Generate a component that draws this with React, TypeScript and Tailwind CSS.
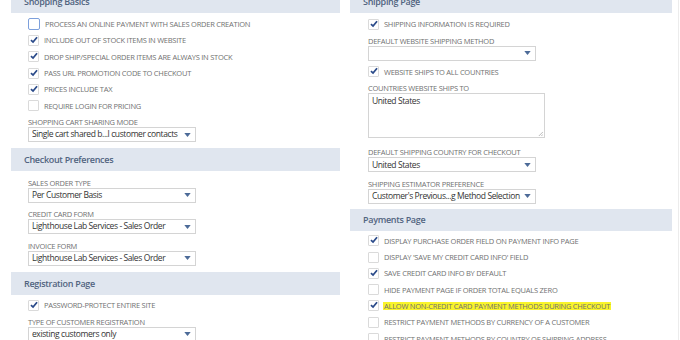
import React from "react";

const font = "font-['Open_Sans','Liberation_Sans',sans-serif]";

function Header({ title }: { title: string }) {
  return (
    <div className="h-[22.5px] bg-[#e0e6ef] pl-[13px] flex items-center text-[9px] tracking-[-0.3px] font-semibold text-[#51647f]">
      {title}
    </div>
  );
}

function Box({ checked, focus }: { checked?: boolean; focus?: boolean }) {
  if (focus) {
    return (
      <div className="w-[12px] h-[12px] shrink-0 border-[1.5px] border-[#7da0dc] rounded-[2px] bg-white" />
    );
  }
  return (
    <div className="w-[11px] h-[11px] shrink-0 border border-[#dadada] rounded-[1px] bg-white relative">
      {checked && (
        <svg
          viewBox="0 0 10 10"
          className="absolute left-[1px] top-[0px] w-[8px] h-[8px]"
        >
          <path
            d="M1.2 5.2 L3.8 7.6 L8.8 1.6"
            fill="none"
            stroke="#2b4b8a"
            strokeWidth="2.2"
          />
        </svg>
      )}
    </div>
  );
}

function CheckRow({
  label,
  checked,
  focus,
  highlight,
}: {
  label: string;
  checked?: boolean;
  focus?: boolean;
  highlight?: boolean;
}) {
  return (
    <div className="h-[16.3px] flex items-center gap-[5px]">
      <Box checked={checked} focus={focus} />
      <span
        className={`text-[7.5px] tracking-[-0.25px] uppercase whitespace-nowrap leading-[8px] text-[#717171] ${
          highlight ? "bg-[#f9f42a] px-[1px] -ml-[1px]" : ""
        }`}
      >
        {label}
      </span>
    </div>
  );
}

function Arrow() {
  return (
    <svg viewBox="0 0 8 5" className="w-[7px] h-[4px] shrink-0">
      <polygon points="0,0 8,0 4,5" fill="#4d6b98" />
    </svg>
  );
}

function Label({ text }: { text: string }) {
  return (
    <div className="h-[10px] leading-[10px] text-[7.5px] tracking-[-0.25px] uppercase whitespace-nowrap text-[#717171]">
      {text}
    </div>
  );
}

function Field({
  label,
  value,
  mt = "mt-[6.5px]",
}: {
  label: string;
  value: string;
  mt?: string;
}) {
  return (
    <div className={mt}>
      <Label text={label} />
      <div className="h-[15px] w-[168px] border border-[#d4d4d4] bg-white flex items-center pl-[3px] pr-[4px] text-[8.5px] tracking-[-0.4px] text-[#333]">
        <span className="flex-1 whitespace-nowrap overflow-hidden">{value}</span>
        <Arrow />
      </div>
    </div>
  );
}

export default function App() {
  return (
    <div className={`w-[680px] h-[340px] overflow-hidden bg-white ${font}`}>
      <div className="flex -mt-[9.5px]">
        {/* left column */}
        <div className="w-[329px] ml-[11px]">
          <Header title="Shopping Basics" />
          <div className="pl-[17px] pt-[3px] pb-[6px]">
            <CheckRow focus label="Process an online payment with sales order creation" />
            <CheckRow checked label="Include out of stock items in website" />
            <CheckRow checked label="Drop ship/special order items are always in stock" />
            <CheckRow checked label="Pass URL promotion code to checkout" />
            <CheckRow checked label="Prices include tax" />
            <CheckRow label="Require login for pricing" />
            <Field mt="mt-[3.5px]" label="Shopping cart sharing mode" value="Single cart shared b...l customer contacts" />
          </div>

          <Header title="Checkout Preferences" />
          <div className="pl-[17px] pt-[0.5px] pb-[6.5px]">
            <Field label="Sales order type" value="Per Customer Basis" />
            <Field label="Credit card form" value="Lighthouse Lab Services - Sales Order" />
            <Field label="Invoice form" value="Lighthouse Lab Services - Sales Order" />
          </div>

          <Header title="Registration Page" />
          <div className="pl-[17px] pt-[2.5px]">
            <CheckRow checked label="Password-protect entire site" />
            <Field mt="mt-[3px]" label="Type of customer registration" value="existing customers only" />
          </div>
        </div>

        {/* right column */}
        <div className="w-[322px] ml-[10px]">
          <Header title="Shipping Page" />
          <div className="pl-[18px] pt-[3px] pb-[5px]">
            <CheckRow checked label="Shipping information is required" />
            <Field mt="mt-[3.5px]" label="Default website shipping method" value="" />
            <div className="mt-[3px]">
              <CheckRow checked label="Website ships to all countries" />
            </div>
            <div className="mt-[3.3px]">
              <Label text="Countries website ships to" />
              <div className="relative h-[45px] w-[177px] border border-[#d4d4d4] bg-white pl-[3px] pt-[1px] text-[8.5px] tracking-[-0.4px] text-[#333]">
                United States
                <svg viewBox="0 0 6 6" className="absolute right-[1px] bottom-[1px] w-[5px] h-[5px]">
                  <path d="M6 1 L1 6 M6 4 L4 6" stroke="#9a9a9a" strokeWidth="0.8" />
                </svg>
              </div>
            </div>
            <Field mt="mt-[9px]" label="Default shipping country for checkout" value="United States" />
            <Field label="Shipping estimator preference" value="Customer's Previous...g Method Selection" />
          </div>

          <Header title="Payments Page" />
          <div className="pl-[18px] pt-[1.2px]">
            <CheckRow checked label="Display purchase order field on payment info page" />
            <CheckRow label="Display 'save my credit card info' field" />
            <CheckRow checked label="Save credit card info by default" />
            <CheckRow label="Hide payment page if order total equals zero" />
            <CheckRow checked highlight label="Allow non-credit card payment methods during checkout" />
            <CheckRow label="Restrict payment methods by currency of a customer" />
            <CheckRow label="Restrict payment methods by country of shipping address" />
          </div>
        </div>

        <div className="ml-[6px] w-px h-[360px] bg-[#ececec]" />
      </div>
    </div>
  );
}
